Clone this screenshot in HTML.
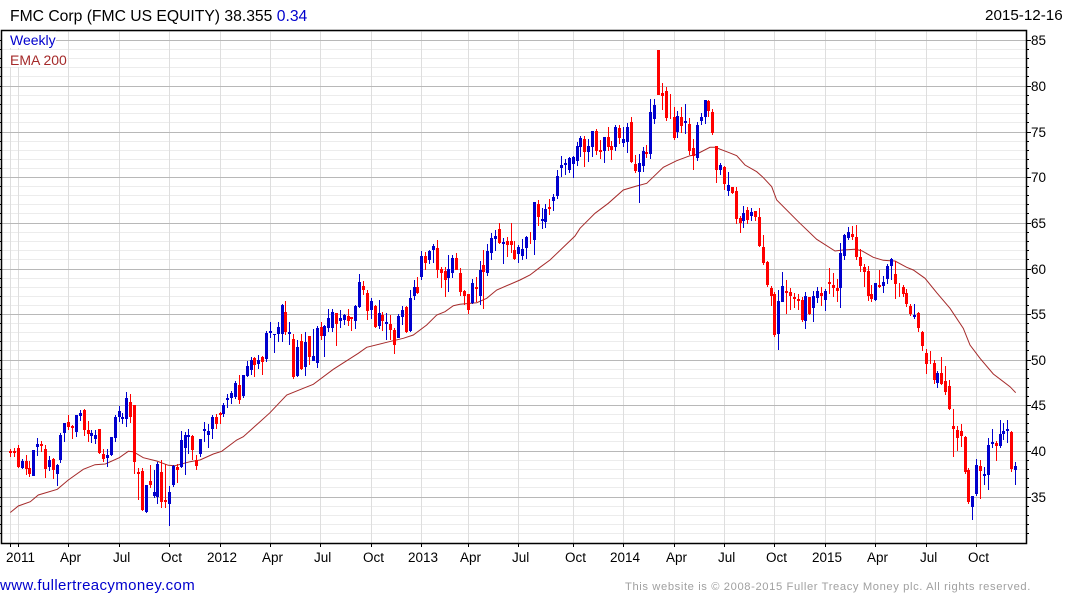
<!DOCTYPE html>
<html><head><meta charset="utf-8"><title>FMC Corp</title>
<style>
html,body{margin:0;padding:0;background:#fff;width:1075px;height:600px;overflow:hidden}
svg{display:block}
text{font-family:"Liberation Sans",Arial,sans-serif}
</style></head><body>
<svg width="1075" height="600" viewBox="0 0 1075 600" xmlns="http://www.w3.org/2000/svg">
<rect width="1075" height="600" fill="#fff"/>
<text x="10" y="21" font-size="15.7" fill="#000">FMC Corp (FMC US EQUITY) 38.355 <tspan fill="#0000cd">0.34</tspan></text>
<text x="985" y="20" font-size="15.2" fill="#000">2015-12-16</text>
<path stroke="#ececec" stroke-width="1" fill="none" d="M2 31.5H1026M2 49.5H1026M2 58.5H1026M2 67.5H1026M2 76.5H1026M2 95.5H1026M2 104.5H1026M2 113.5H1026M2 122.5H1026M2 141.5H1026M2 150.5H1026M2 159.5H1026M2 168.5H1026M2 186.5H1026M2 195.5H1026M2 204.5H1026M2 213.5H1026M2 232.5H1026M2 241.5H1026M2 250.5H1026M2 259.5H1026M2 278.5H1026M2 287.5H1026M2 296.5H1026M2 305.5H1026M2 323.5H1026M2 332.5H1026M2 341.5H1026M2 350.5H1026M2 369.5H1026M2 378.5H1026M2 387.5H1026M2 396.5H1026M2 414.5H1026M2 423.5H1026M2 432.5H1026M2 441.5H1026M2 460.5H1026M2 469.5H1026M2 478.5H1026M2 487.5H1026M2 506.5H1026M2 515.5H1026M2 524.5H1026M2 533.5H1026"/>
<path stroke="#dedede" stroke-width="1" fill="none" d="M10.5 31V543M18.5 31V543M68.5 31V543M119.5 31V543M169.5 31V543M220.5 31V543M270.5 31V543M320.5 31V543M371.5 31V543M421.5 31V543M468.5 31V543M518.5 31V543M573.5 31V543M623.5 31V543M674.5 31V543M724.5 31V543M774.5 31V543M825.5 31V543M875.5 31V543M926.5 31V543M976.5 31V543"/>
<path stroke="#b8b8b8" stroke-width="1" fill="none" d="M2 40.5H1026M2 86.5H1026M2 132.5H1026M2 177.5H1026M2 223.5H1026M2 269.5H1026M2 314.5H1026M2 360.5H1026M2 405.5H1026M2 451.5H1026M2 497.5H1026"/>
<rect x="2" y="31" width="54" height="17" fill="#fff"/>
<rect x="2" y="50" width="65" height="17" fill="#fff"/>
<text x="10" y="45" font-size="14" fill="#0000cd">Weekly</text>
<text x="10" y="65" font-size="14" fill="#a52a2a">EMA 200</text>
<polyline fill="none" stroke="#a52a2a" stroke-width="1" points="10.3,512.5 18.3,506 30.3,501.7 38.3,495 57.3,489.3 68.3,480 83.3,469.3 95,464.7 105.3,464 119.3,457.7 128.3,451.3 133.3,451.7 143.3,457.7 156.7,461 168.3,465.3 175,465.7 190,461.7 200,460 213.3,454 221.7,451.3 236.7,440 243.3,436.7 260,421.7 270,412.7 286.7,395 303.3,388.3 313.3,384.3 333.3,369.3 358.3,353.3 366.7,347.3 386.7,342.3 403.3,338.3 413.3,335 426.7,325 436.7,315 445,311.7 453.3,305.7 460,304.3 476.7,302.7 486.7,298.3 496.7,290 520,280 530,275 540,267.3 550,260 575,236 580,228.3 595,213.3 608.3,203.3 623.3,190 636.7,186 646.7,183.3 663.3,167.3 676.7,160.7 690,155.7 695,155 710,147.3 715,147.3 728.3,152.3 736.7,155.7 745,165 756.7,171.7 763,177.3 771.7,186.7 776.7,200 798.3,221.7 816.7,239.3 835,251 843,250 855,249.3 861.7,250.7 873.3,257.3 883.3,260.3 895,261 906.7,267.3 913.3,270 925,278.3 936.7,292.7 950,308.3 963.3,328.3 970,345 980,358.3 993.3,374 1010,386.7 1015.7,392.7"/>
<g transform="translate(.5,0)" fill="none">
<path stroke="#f00" stroke-width="1" d="M10 449V457M14 448V457M18 445V468M26 455V475M29 461V477M41 441V452M45 445V478M53 458V479M68 415V430M72 425V439M84 409V436M88 421V442M99 429V454M103 449V462M130 394V423M134 405V474M138 468V500M142 468V511M150 465V488M161 460V508M165 464V508M177 464V483M192 435V460M196 455V470M216 414V429M220 412V424M239 375V404M254 357V377M262 356V375M285 301V335M293 334V379M301 334V370M309 336V365M321 322V340M336 313V346M348 309V326M351 317V331M363 281V295M367 290V320M375 305V328M382 312V331M390 315V340M394 328V354M406 306V333M417 277V294M425 252V270M437 240V278M441 267V288M445 267V297M456 253V270M460 268V296M464 290V305M468 294V314M476 277V302M483 250V309M499 223V244M507 237V257M511 223V253M514 241V260M530 232V244M538 200V226M549 199V215M584 136V167M596 129V155M600 140V159M608 127V151M611 141V160M619 125V144M631 117V163M635 155V173M646 145V158M658 50V95M662 83V110M666 87V121M670 94V119M674 107V140M681 107V133M689 118V155M693 139V170M708 100V117M712 109V135M716 146V183M724 166V190M732 187V194M736 187V224M740 216V233M747 207V224M755 211V221M759 208V247M763 235V265M767 261V287M771 286V306M774 292V337M786 280V314M790 288V310M794 293V308M798 294V310M802 297V322M809 297V315M821 287V306M829 268V294M833 273V297M837 279V302M852 226V240M856 225V260M860 249V272M864 264V287M868 266V301M871 285V302M879 270V288M895 261V299M899 283V297M903 285V297M906 289V307M910 304V316M918 312V332M922 331V351M926 349V374M930 351V364M934 360V384M941 357V385M945 366V395M949 380V410M953 409V457M957 426V451M961 424V447M965 436V474M968 468V504M980 460V499M996 441V461M1011 431V472"/>
<path stroke="#f00" stroke-width="3" d="M10 451V453M14 451V453M18 448V467M26 461V469M29 468V474M41 444V446M45 449V469M53 459V470M68 422V427M72 426V428M84 410V430M88 430V434M99 429V453M103 454V459M130 402V417M134 405V462M138 472V474M142 471V510M150 481V485M161 472V502M165 500V502M177 467V470M192 436V450M196 460V466M216 417V424M220 413V415M239 385V400M254 358V365M262 357V362M285 312V332M293 339V377M301 341V369M309 336V357M321 327V336M336 313V324M348 316V321M351 317V319M363 286V290M367 293V311M375 306V327M382 315V321M390 324V330M394 330V345M406 307V332M417 287V293M425 256V263M437 248V270M441 269V273M445 271V280M456 258V270M460 273V292M464 291V296M468 294V310M476 287V289M483 265V272M499 229V243M507 241V245M511 241V245M514 250V259M538 204V217M549 207V209M584 139V152M596 131V151M600 150V152M608 137V147M611 146V150M619 128V138M631 122V162M635 164V171M646 152V154M658 50V95M662 93V96M666 91V118M674 117V138M681 117V126M689 124V151M693 148V156M708 101V111M712 112V133M716 146V170M724 167V184M732 187V193M736 191V219M740 218V223M747 210V220M755 211V217M759 217V246M763 247V263M767 262V285M771 288V296M774 294V335M786 291V293M790 292V296M794 297V299M798 299V301M802 300V320M809 297V314M821 293V296M829 282V284M833 285V288M837 288V291M852 234V237M856 237V257M860 257V266M864 267V272M868 271V296M871 294V299M879 285V287M895 274V284M903 287V294M906 293V304M910 306V314M918 313V328M922 332V346M926 353V364M934 363V380M941 373V384M945 381V392M949 386V409M953 426V429M957 430V438M961 431V436M965 437V472M968 470V502M980 466V471M996 443V446M1011 432V469"/>
<path stroke="#0000cd" stroke-width="1" d="M22 459V469M33 450V476M37 438V456M49 456V471M57 464V486M60 433V463M64 423V442M76 415V437M80 410V421M91 430V443M95 430V444M107 449V467M111 437V456M115 415V442M119 406V422M122 413V424M126 392V427M146 485V513M154 470V498M157 462V504M169 486V526M173 465V487M181 431V468M185 432V475M188 429V454M200 439V457M204 422V442M208 424V448M212 415V439M223 403V417M227 394V408M231 391V404M235 381V399M243 375V398M247 361V377M251 357V375M258 355V369M266 331V362M270 322V338M274 334V353M278 322V342M282 304V342M289 322V345M297 340V377M305 332V376M313 329V361M317 326V368M324 325V357M328 309V332M332 309V332M340 310V328M344 314V325M355 305V329M359 274V308M371 298V319M379 300V329M386 313V340M398 314V338M402 306V325M410 290V332M414 280V300M421 251V280M429 250V264M433 244V263M448 255V292M452 255V278M472 279V304M480 261V305M487 244V276M491 233V260M495 230V251M503 238V264M518 245V263M522 239V260M526 236V259M534 202V255M542 208V229M545 204V228M553 194V211M557 170V199M561 156V177M565 159V175M569 157V173M573 156V178M577 142V166M580 136V157M588 139V162M592 131V157M604 137V163M615 125V151M623 127V147M627 123V153M639 154V203M643 147V172M650 99V159M654 99V124M677 111V138M685 104V134M697 122V161M701 113V125M705 100V124M720 163V175M728 172V196M743 206V228M751 208V221M778 290V350M782 272V302M805 292V329M813 291V322M817 287V303M825 289V311M840 243V308M844 234V260M848 227V240M875 283V301M883 276V293M887 264V284M891 258V280M914 304V319M937 371V388M972 496V520M976 459V496M984 467V485M988 438V490M992 429V448M1000 420V448M1003 423V440M1007 420V443M1015 462V485"/>
<path stroke="#0000cd" stroke-width="3" d="M22 461V468M33 450V476M37 444V447M49 460V467M57 465V474M60 435V460M64 423V433M76 415V432M80 413V416M91 433V436M95 435V439M107 455V458M111 437V455M115 417V438M119 411V417M122 417V419M126 398V419M146 485V512M154 492V496M157 464V497M169 492V504M173 466V485M181 440V467M185 435V448M188 435V437M200 439V454M204 429V431M208 431V435M212 417V429M223 405V414M227 398V400M231 393V398M235 383V397M243 375V396M247 366V376M251 360V370M258 360V364M266 333V359M270 331V333M274 334V335M278 327V334M282 305V334M289 332V334M297 347V376M305 342V367M313 356V361M317 328V363M324 326V336M328 318V328M332 312V328M340 318V321M344 315V320M355 306V321M359 282V307M371 301V310M379 313V326M386 322V324M398 316V338M402 310V317M410 298V331M414 287V296M421 256V277M429 251V260M433 246V250M448 269V278M452 258V273M472 283V303M480 270V296M487 251V273M491 238V253M495 236V239M503 242V244M518 247V254M522 249V256M526 237V248M534 202V240M542 219V221M545 209V222M553 197V201M557 176V196M561 165V168M565 163V165M569 158V170M573 157V164M577 146V161M580 138V147M588 146V152M592 131V147M604 137V151M615 127V147M623 139V143M627 127V142M639 163V172M643 151V166M650 112V154M654 105V119M677 116V132M685 121V123M697 125V158M701 117V121M705 100V117M720 165V170M728 185V191M743 213V221M751 212V216M778 301V334M782 286V302M805 296V321M813 296V308M817 291V298M825 291V300M840 253V288M844 235V256M848 232V238M875 283V300M883 282V286M887 266V279M891 259V266M914 315V317M937 373V383M972 496V507M976 465V494M984 474V476M988 445V475M992 442V444M1000 434V446M1003 431V434M1007 429V431M1015 466V470"/>
</g>
<path stroke="#000" stroke-width="1.5" fill="none" d="M1.5 30.5H1026.5V543.5H1.5Z"/>
<path stroke="#000" stroke-width="1" fill="none" d="M1026 40.5H1031M1026 86.5H1031M1026 132.5H1031M1026 177.5H1031M1026 223.5H1031M1026 269.5H1031M1026 314.5H1031M1026 360.5H1031M1026 405.5H1031M1026 451.5H1031M1026 497.5H1031M1026 49.5H1029M1026 58.5H1029M1026 67.5H1029M1026 76.5H1029M1026 95.5H1029M1026 104.5H1029M1026 113.5H1029M1026 122.5H1029M1026 141.5H1029M1026 150.5H1029M1026 159.5H1029M1026 168.5H1029M1026 186.5H1029M1026 195.5H1029M1026 204.5H1029M1026 213.5H1029M1026 232.5H1029M1026 241.5H1029M1026 250.5H1029M1026 259.5H1029M1026 278.5H1029M1026 287.5H1029M1026 296.5H1029M1026 305.5H1029M1026 323.5H1029M1026 332.5H1029M1026 341.5H1029M1026 350.5H1029M1026 369.5H1029M1026 378.5H1029M1026 387.5H1029M1026 396.5H1029M1026 414.5H1029M1026 423.5H1029M1026 432.5H1029M1026 441.5H1029M1026 460.5H1029M1026 469.5H1029M1026 478.5H1029M1026 487.5H1029M1026 506.5H1029M1026 515.5H1029M1026 524.5H1029M1026 533.5H1029"/>
<path stroke="#000" stroke-width="1" fill="none" d="M0 40.5H2M0 49.5H2M0 58.5H2M0 67.5H2M0 76.5H2M0 86.5H2M0 95.5H2M0 104.5H2M0 113.5H2M0 122.5H2M0 132.5H2M0 141.5H2M0 150.5H2M0 159.5H2M0 168.5H2M0 177.5H2M0 186.5H2M0 195.5H2M0 204.5H2M0 213.5H2M0 223.5H2M0 232.5H2M0 241.5H2M0 250.5H2M0 259.5H2M0 269.5H2M0 278.5H2M0 287.5H2M0 296.5H2M0 305.5H2M0 314.5H2M0 323.5H2M0 332.5H2M0 341.5H2M0 350.5H2M0 360.5H2M0 369.5H2M0 378.5H2M0 387.5H2M0 396.5H2M0 405.5H2M0 414.5H2M0 423.5H2M0 432.5H2M0 441.5H2M0 451.5H2M0 460.5H2M0 469.5H2M0 478.5H2M0 487.5H2M0 497.5H2M0 506.5H2M0 515.5H2M0 524.5H2M0 533.5H2"/>
<path stroke="#000" stroke-width="1" fill="none" d="M10.5 544V547M18.5 544V547M68.5 544V547M119.5 544V547M169.5 544V547M220.5 544V547M270.5 544V547M320.5 544V547M371.5 544V547M421.5 544V547M468.5 544V547M518.5 544V547M573.5 544V547M623.5 544V547M674.5 544V547M724.5 544V547M774.5 544V547M825.5 544V547M875.5 544V547M926.5 544V547M976.5 544V547"/>
<g font-size="13.5" fill="#000">
<text x="1031" y="45">85</text><text x="1031" y="91">80</text><text x="1031" y="137">75</text><text x="1031" y="182">70</text><text x="1031" y="228">65</text><text x="1031" y="274">60</text><text x="1031" y="319">55</text><text x="1031" y="365">50</text><text x="1031" y="410">45</text><text x="1031" y="456">40</text><text x="1031" y="502">35</text>
<text x="6" y="562">2011</text><text x="60" y="562">Apr</text><text x="113" y="562">Jul</text><text x="161" y="562">Oct</text><text x="207" y="562">2012</text><text x="262" y="562">Apr</text><text x="314" y="562">Jul</text><text x="363" y="562">Oct</text><text x="408" y="562">2013</text><text x="460" y="562">Apr</text><text x="512" y="562">Jul</text><text x="565" y="562">Oct</text><text x="610" y="562">2014</text><text x="666" y="562">Apr</text><text x="718" y="562">Jul</text><text x="766" y="562">Oct</text><text x="812" y="562">2015</text><text x="867" y="562">Apr</text><text x="920" y="562">Jul</text><text x="968" y="562">Oct</text>
</g>
<text x="0" y="590" font-size="15" letter-spacing=".38" fill="#0000cd">www.fullertreacymoney.com</text>
<text x="625" y="590" font-size="11.2" letter-spacing=".61" fill="#a0a0a0">This website is © 2008-2015 Fuller Treacy Money plc. All rights reserved.</text>
</svg>
</body></html>
